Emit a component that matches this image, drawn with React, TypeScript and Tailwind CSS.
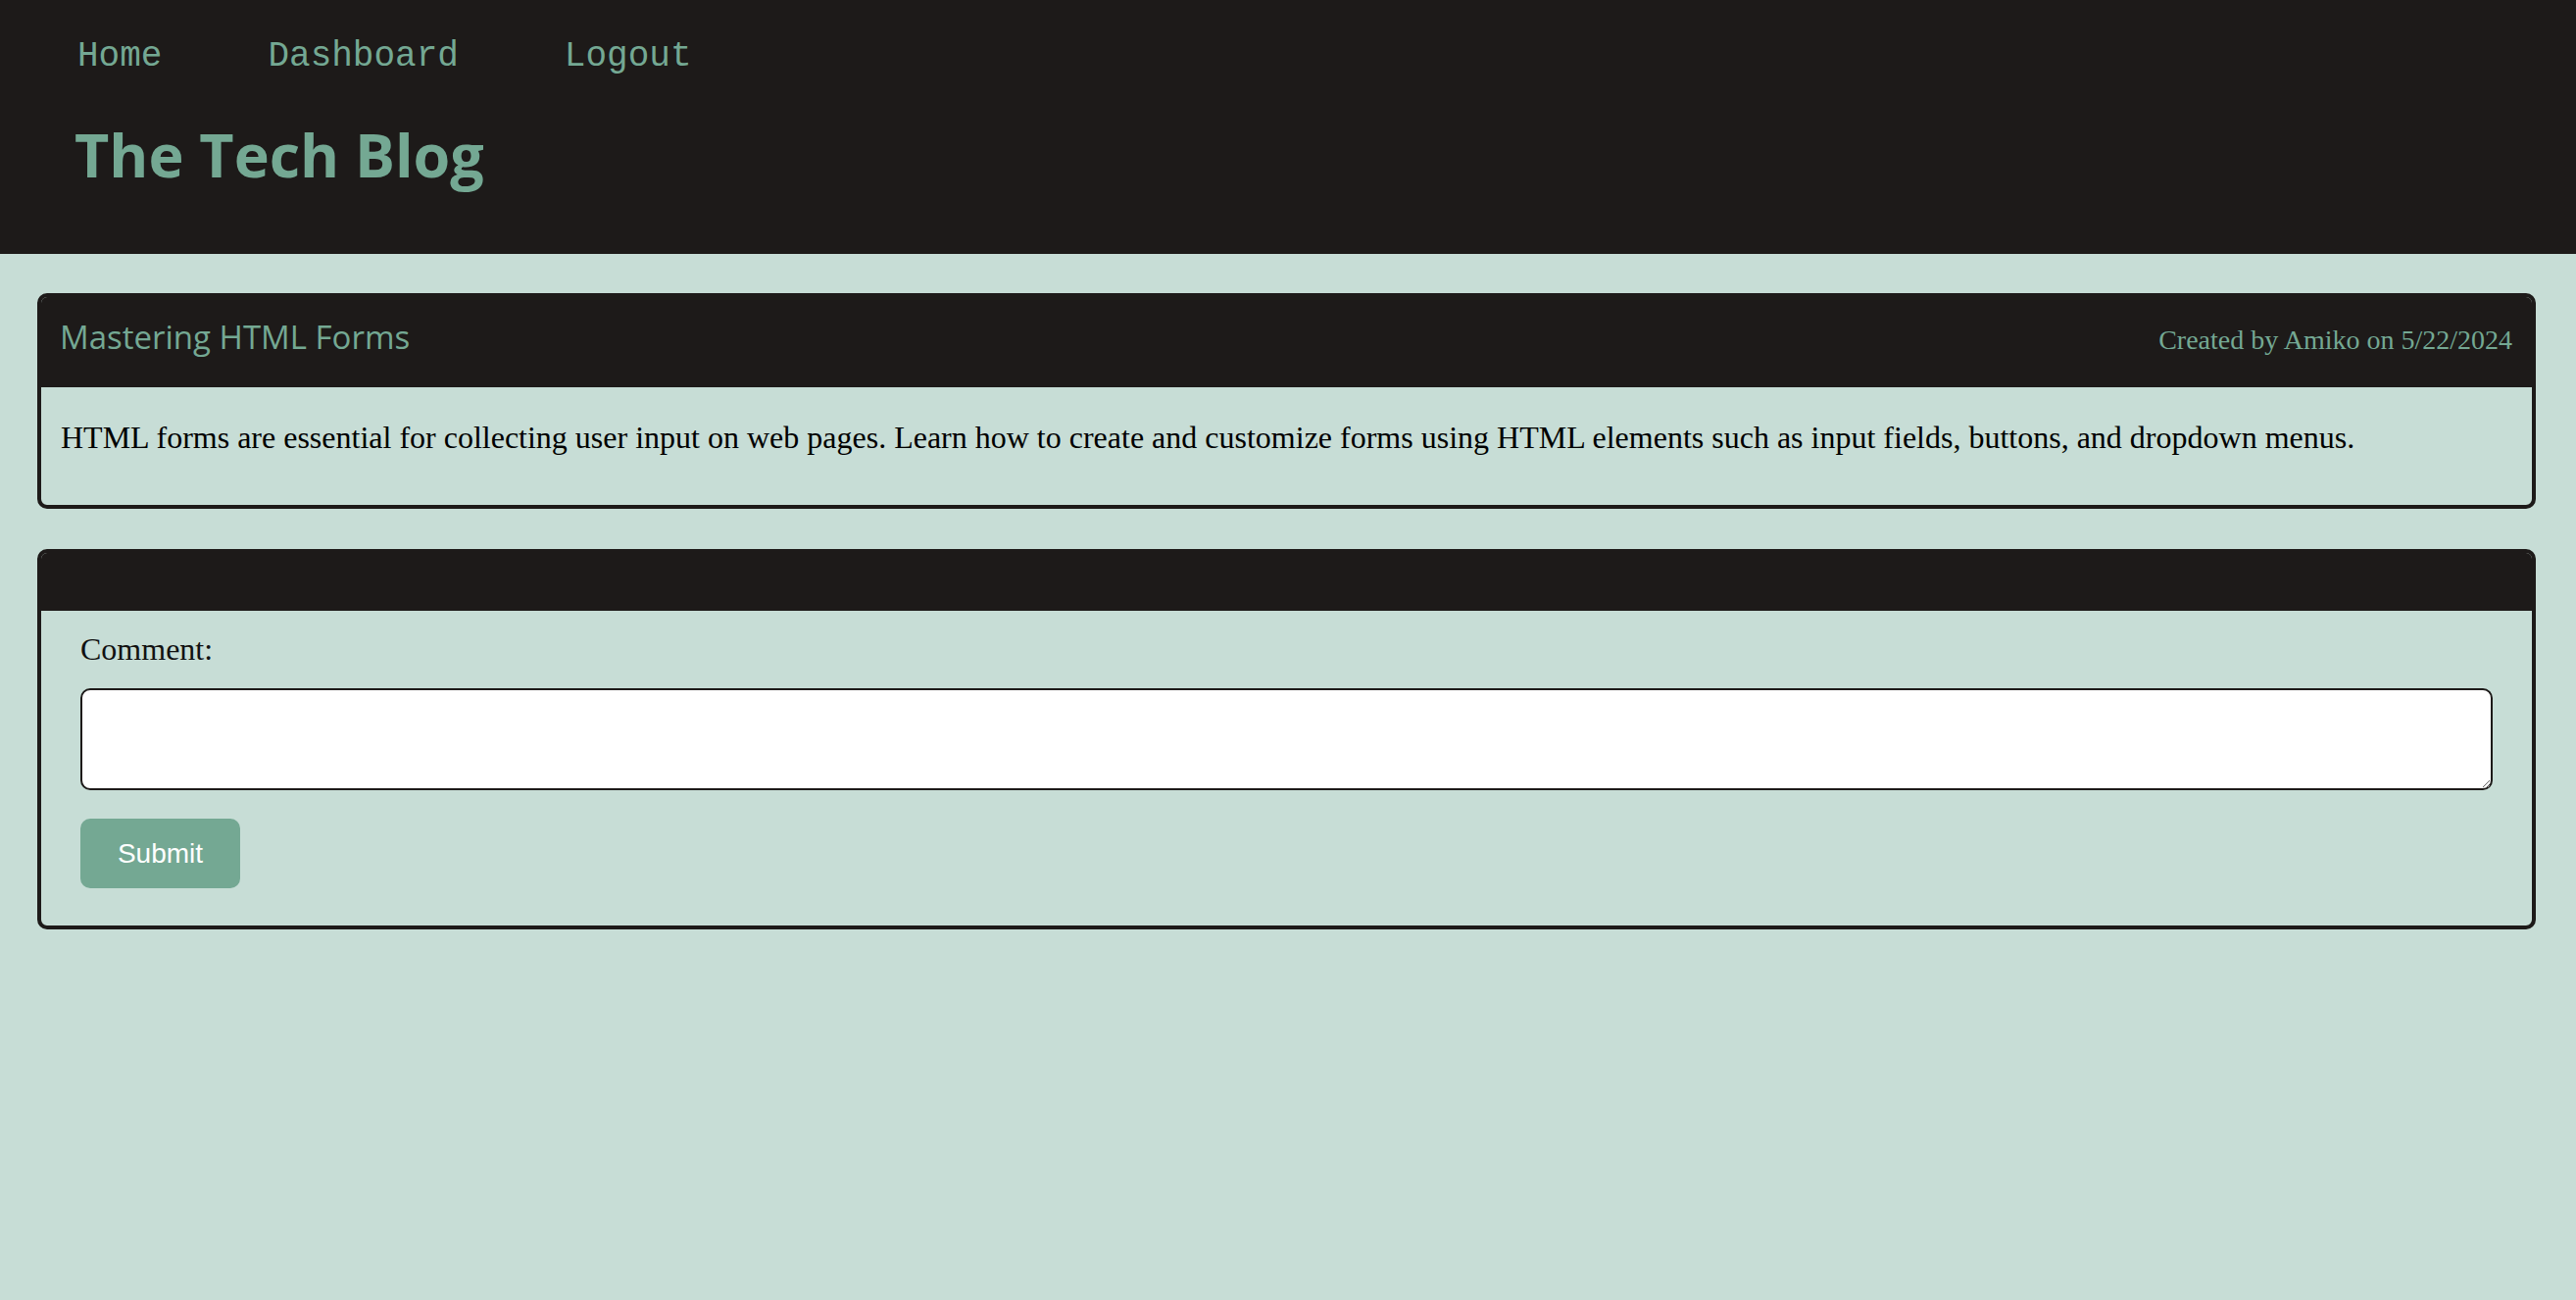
export default function App() {
  return (
    <div className="min-h-screen bg-[#c7ddd6]">
      {/* site header */}
      <header className="h-[259px] bg-[#1d1a19] pl-[76px] pt-[38px]">
        <nav
          className="ml-[3px] flex gap-[108px] text-[36px] leading-[40px] text-[#74a893]"
          style={{ fontFamily: '"Liberation Mono", "Courier New", monospace' }}
        >
          <a href="#">Home</a>
          <a href="#">Dashboard</a>
          <a href="#">Logout</a>
        </nav>
        <h1
          className="mt-[44px] text-[61px] leading-[72px] font-bold text-[#74a893]"
          style={{ fontFamily: '"Open Sans", sans-serif' }}
        >
          The Tech Blog
        </h1>
      </header>

      <main className="pl-[38px] pr-[41px] pt-[40px]">
        {/* post */}
        <section className="rounded-[10px] border-4 border-[#1d1a19] overflow-hidden">
          <div className="h-[92px] bg-[#1d1a19] pl-[19px] pr-[20px] pt-[21px] flex items-baseline justify-between">
            <h2
              className="text-[33px] leading-[40px] text-[#74a893]"
              style={{ fontFamily: '"Open Sans", sans-serif' }}
            >
              Mastering HTML Forms
            </h2>
            <span
              className="text-[28px] leading-[40px] text-[#74a893]"
              style={{ fontFamily: '"Liberation Serif", "Times New Roman", serif' }}
            >
              Created by Amiko on 5/22/2024
            </span>
          </div>
          <div
            className="px-[20px] pt-[33px] pb-[51px] text-[32px] leading-[36px] text-black"
            style={{ fontFamily: '"Liberation Serif", "Times New Roman", serif' }}
          >
            <p>
              HTML forms are essential for collecting user input on web pages. Learn how to create and customize forms
              using HTML elements such as input fields, buttons, and dropdown menus.
            </p>
          </div>
        </section>

        {/* comment form */}
        <section className="mt-[41px] rounded-[10px] border-4 border-[#1d1a19] overflow-hidden">
          <div className="h-[59px] bg-[#1d1a19]"></div>
          <form className="flex flex-col items-start px-[40px] pt-[21px] pb-[38px]">
            <label
              className="text-[32px] leading-[36px] text-[#111]"
              style={{ fontFamily: '"Liberation Serif", "Times New Roman", serif' }}
            >
              Comment:
            </label>
            <textarea className="mt-[22px] h-[104px] w-full rounded-[10px] border-2 border-[#1d1a19] bg-white"></textarea>
            <button
              type="button"
              className="mt-[29px] h-[71px] w-[163px] rounded-[10px] bg-[#74a893] text-[28px] text-white"
              style={{ fontFamily: '"Liberation Sans", Arial, sans-serif' }}
            >
              Submit
            </button>
          </form>
        </section>
      </main>
    </div>
  );
}
